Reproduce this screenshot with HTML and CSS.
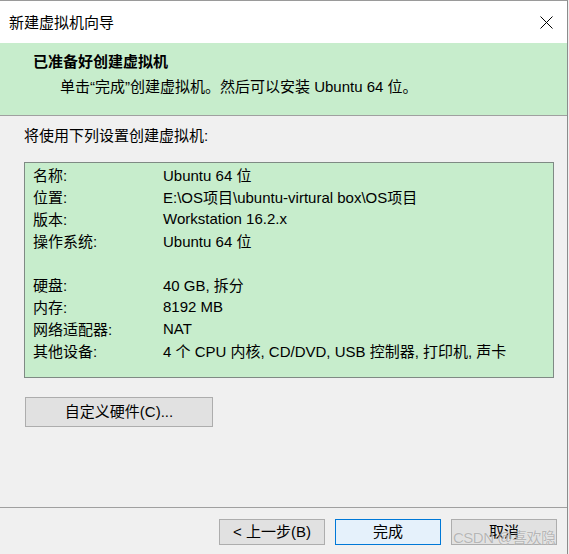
FILE: index.html
```html
<!DOCTYPE html>
<html lang="zh-CN">
<head>
<meta charset="utf-8">
<title>新建虚拟机向导</title>
<link rel="stylesheet" href="styles.css">
</head>
<body>
<div class="window">
  <div class="titlebar">
    <span class="title">新建虚拟机向导</span>
    <span class="close" aria-label="关闭">
      <svg width="13" height="13" viewBox="0 0 13 13"><path d="M0.5 0.5 L12.5 12.5 M12.5 0.5 L0.5 12.5" stroke="#000" stroke-width="1" fill="none"/></svg>
    </span>
  </div>
  <div class="header">
    <div class="header-title">已准备好创建虚拟机</div>
    <div class="header-sub">单击“完成”创建虚拟机。然后可以安装 Ubuntu 64 位。</div>
  </div>
  <div class="content">
    <div class="intro">将使用下列设置创建虚拟机:</div>
    <div class="summary">
      <div class="lbl">名称:</div><div class="val">Ubuntu 64 位</div>
      <div class="lbl">位置:</div><div class="val">E:\OS项目\ubuntu-virtural box\OS项目</div>
      <div class="lbl">版本:</div><div class="val">Workstation 16.2.x</div>
      <div class="lbl">操作系统:</div><div class="val">Ubuntu 64 位</div>
      <div class="lbl"></div><div class="val"></div>
      <div class="lbl">硬盘:</div><div class="val">40 GB, 拆分</div>
      <div class="lbl">内存:</div><div class="val">8192 MB</div>
      <div class="lbl">网络适配器:</div><div class="val">NAT</div>
      <div class="lbl">其他设备:</div><div class="val">4 个 CPU 内核, CD/DVD, USB 控制器, 打印机, 声卡</div>
    </div>
    <button class="btn btn-custom">自定义硬件(C)...</button>
  </div>
  <div class="footer">
    <button class="btn">&lt; 上一步(B)</button>
    <button class="btn btn-default">完成</button>
    <button class="btn">取消</button>
  </div>
  <div class="watermark">CSDN @喜欢隐</div>
</div>
</body>
</html>
```
FILE: styles.css
```css
* { box-sizing: border-box; }
html, body {
  margin: 0;
  padding: 0;
  background: #f0f0f0;
}
body {
  width: 569px;
  height: 554px;
  overflow: hidden;
  font-family: "Liberation Sans", "Noto Sans CJK SC", sans-serif;
  font-size: 15px;
  color: #000;
}
.window {
  position: relative;
  width: 568px;
  height: 554px;
  display: flex;
  flex-direction: column;
  border-top: 1px solid #9a9a9a;
  border-right: 1px solid #8c8c8c;
  background: #f0f0f0;
}
.titlebar {
  height: 42px;
  background: #fff;
  display: flex;
  align-items: center;
  justify-content: space-between;
  padding: 2px 14px 0 9px;
}
.title { line-height: 20px; }
.close { display: flex; width: 13px; height: 13px; margin-top: -1px; }
.header {
  height: 73px;
  background: #c7edcc;
  border-bottom: 1px solid #a0a0a0;
  padding: 9px 0 0 33px;
}
.header-title {
  font-weight: bold;
  line-height: 20px;
}
.header-sub {
  line-height: 20px;
  margin-top: 5px;
  padding-left: 27px;
}
.content {
  flex: 1;
  padding: 10px 0 0 24px;
}
.intro { line-height: 20px; }
.summary {
  margin-top: 16px;
  width: 530px;
  height: 216px;
  background: #c7edcc;
  border: 1px solid #7f8a84;
  display: grid;
  grid-template-columns: 130px 1fr;
  grid-auto-rows: 22px;
  padding: 0 0 0 8px;
  align-items: center;
}
.btn {
  font-family: inherit;
  font-size: 15px;
  color: #000;
  background: #e1e1e1;
  border: 1px solid #adadad;
  border-radius: 0;
  margin: 0;
  padding: 0;
  width: 106px;
  height: 26px;
  line-height: 22px;
}
.btn-custom {
  display: block;
  margin: 19px 0 0 1px;
  width: 188px;
  height: 30px;
}
.btn-default {
  background: #e5f1fb;
  border-color: #0078d7;
}
.footer {
  border-top: 1px solid #a0a0a0;
  padding: 11px 10px 9px 0;
  display: flex;
  justify-content: flex-end;
  gap: 10px;
}
.watermark {
  position: absolute;
  left: 453px;
  top: 528px;
  font-size: 15px;
  letter-spacing: -0.5px;
  line-height: 18px;
  color: rgba(120, 120, 120, 0.5);
  text-shadow: 0 0 1px rgba(255, 255, 255, 0.8);
  pointer-events: none;
}
```
